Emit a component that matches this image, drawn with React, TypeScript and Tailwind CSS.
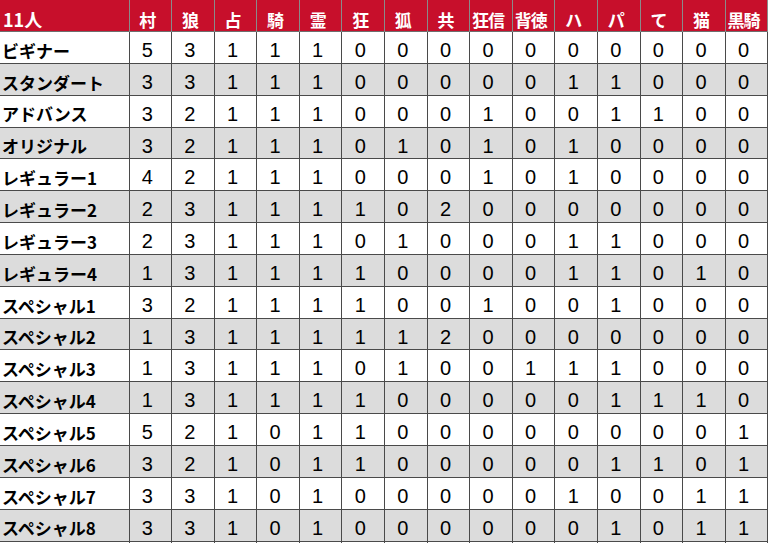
import React from 'react';

const headers = ['村', '狼', '占', '騎', '霊', '狂', '狐', '共', '狂信', '背徳', 'ハ', 'パ', 'て', '猫', '黒騎'];

const rows: [string, number[]][] = [
    ['ビギナー', [5, 3, 1, 1, 1, 0, 0, 0, 0, 0, 0, 0, 0, 0, 0]],
    ['スタンダート', [3, 3, 1, 1, 1, 0, 0, 0, 0, 0, 1, 1, 0, 0, 0]],
    ['アドバンス', [3, 2, 1, 1, 1, 0, 0, 0, 1, 0, 0, 1, 1, 0, 0]],
    ['オリジナル', [3, 2, 1, 1, 1, 0, 1, 0, 1, 0, 1, 0, 0, 0, 0]],
    ['レギュラー1', [4, 2, 1, 1, 1, 0, 0, 0, 1, 0, 1, 0, 0, 0, 0]],
    ['レギュラー2', [2, 3, 1, 1, 1, 1, 0, 2, 0, 0, 0, 0, 0, 0, 0]],
    ['レギュラー3', [2, 3, 1, 1, 1, 0, 1, 0, 0, 0, 1, 1, 0, 0, 0]],
    ['レギュラー4', [1, 3, 1, 1, 1, 1, 0, 0, 0, 0, 1, 1, 0, 1, 0]],
    ['スペシャル1', [3, 2, 1, 1, 1, 1, 0, 0, 1, 0, 0, 1, 0, 0, 0]],
    ['スペシャル2', [1, 3, 1, 1, 1, 1, 1, 2, 0, 0, 0, 0, 0, 0, 0]],
    ['スペシャル3', [1, 3, 1, 1, 1, 0, 1, 0, 0, 1, 1, 1, 0, 0, 0]],
    ['スペシャル4', [1, 3, 1, 1, 1, 1, 0, 0, 0, 0, 0, 1, 1, 1, 0]],
    ['スペシャル5', [5, 2, 1, 0, 1, 1, 0, 0, 0, 0, 0, 0, 0, 0, 1]],
    ['スペシャル6', [3, 2, 1, 0, 1, 1, 0, 0, 0, 0, 0, 1, 1, 0, 1]],
    ['スペシャル7', [3, 3, 1, 0, 1, 0, 0, 0, 0, 0, 1, 0, 0, 1, 1]],
    ['スペシャル8', [3, 3, 1, 0, 1, 0, 0, 0, 0, 0, 0, 1, 0, 1, 1]],
];

const grid = 'grid grid-cols-[129.5px_repeat(15,42.6px)]';

export default function App() {
    return (
        <div className="w-[768px] h-[543px] overflow-hidden bg-white text-black">
            {/* header */}
            <div className={`${grid} h-[32px] bg-[#c70f2b] text-white border-b border-[#6e6e6e]`}>
                <div className="flex items-center pl-[3px] pt-[6px] border-r border-[#8a8a8a] text-[18px] font-bold font-['Noto_Sans_CJK_JP',sans-serif]">
                    11人
                </div>
                {headers.map((h, i) => (
                    <div
                        key={i}
                        className="flex items-center justify-center pr-[6px] pt-[6px] border-r border-[#8a8a8a] text-[17px] font-bold tracking-[-1px] font-['Noto_Sans_CJK_JP',sans-serif]"
                    >
                        {h}
                    </div>
                ))}
            </div>

            {rows.map(([name, vals], r) => (
                <div
                    key={name}
                    className={`${grid} h-[31.85px] border-b border-[#4a4a4a] ${r % 2 === 1 ? 'bg-[#dcdcdc]' : 'bg-white'}`}
                >
                    <div className="flex items-center pl-[2px] pt-[4px] border-r border-[#4a4a4a] text-[17px] font-bold font-['Noto_Sans_CJK_JP',sans-serif] whitespace-nowrap">
                        {name}
                    </div>
                    {vals.map((v, i) => (
                        <div
                            key={i}
                            className="flex items-center justify-center pr-[6px] pt-[3px] border-r border-[#4a4a4a] text-[20px] font-['Liberation_Sans',sans-serif]"
                        >
                            {v}
                        </div>
                    ))}
                </div>
            ))}
        </div>
    );
}
